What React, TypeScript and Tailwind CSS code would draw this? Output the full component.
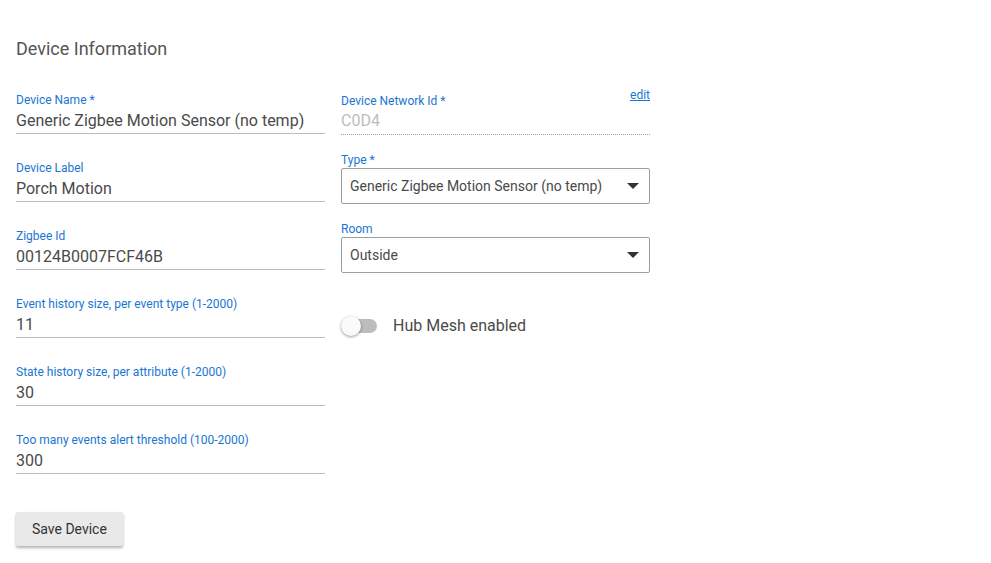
import React from "react";

const font = { fontFamily: "Roboto, 'Liberation Sans', sans-serif" };

function TextField({ label, value }: { label: string; value: string }) {
  return (
    <div className="mb-[27px]">
      <div className="h-[14px] text-[12px] leading-[14px] text-[#1976d2]">{label}</div>
      <div className="h-[27px] border-b border-[#bdbdbd] pt-[2px] text-[16px] leading-[24px] text-[#4a4a4a]">{value}</div>
    </div>
  );
}

function SelectField({ label, value }: { label: string; value: string }) {
  return (
    <div>
      <div className="h-[15px] text-[12px] leading-[14px] text-[#1976d2]">{label}</div>
      <div className="flex h-[36px] items-center justify-between rounded-[2px] border border-[#9e9e9e] pl-[8px] pr-[10px] text-[14px] text-[#4a4a4a]">
        <span>{value}</span>
        <svg width="12" height="6" viewBox="0 0 12 6">
          <path d="M0 0 L12 0 L6 6 Z" fill="#333" />
        </svg>
      </div>
    </div>
  );
}

export default function App() {
  const fields = [
    { label: "Device Name *", value: "Generic Zigbee Motion Sensor (no temp)" },
    { label: "Device Label", value: "Porch Motion" },
    { label: "Zigbee Id", value: "00124B0007FCF46B" },
    { label: "Event history size, per event type (1-2000)", value: "11" },
    { label: "State history size, per attribute (1-2000)", value: "30" },
    { label: "Too many events alert threshold (100-2000)", value: "300" },
  ];

  return (
    <div className="min-h-screen bg-white px-4 pt-[37px]" style={font}>
      <h2 className="h-[24px] text-[18px] leading-[24px] text-[#555]">Device Information</h2>

      <div className="mt-[32px] flex gap-4">
        {/* Left column */}
        <div className="w-[309px]">
          {fields.map((f) => (
            <TextField key={f.label} label={f.label} value={f.value} />
          ))}
        </div>

        {/* Right column */}
        <div className="w-[309px]">
          <div className="relative">
            <div className="h-[14px] pt-[1px] text-[12px] leading-[14px] text-[#1976d2]">Device Network Id *</div>
            <a className="absolute right-0 top-[-5px] text-[12px] leading-[14px] text-[#1976d2] underline" href="#">
              edit
            </a>
            <div className="h-[28px] border-b border-dotted border-[#9e9e9e] text-[16px] leading-[27px] text-[#bdbdbd]">C0D4</div>
          </div>

          <div className="mt-[18px]">
            <SelectField label="Type *" value="Generic Zigbee Motion Sensor (no temp)" />
          </div>
          <div className="mt-[18px]">
            <SelectField label="Room" value="Outside" />
          </div>

          <div className="mt-[43px] flex h-[20px] items-center">
            <div className="relative h-[20px] w-[36px]">
              <div className="absolute left-0 top-[3px] h-[14px] w-[36px] rounded-full bg-[#bdbdbd]" />
              <div className="absolute left-0 top-0 h-[20px] w-[20px] rounded-full bg-[#fafafa] shadow-[0_1px_3px_rgba(0,0,0,0.4)]" />
            </div>
            <span className="ml-[16px] text-[16px] text-[#4a4a4a]">Hub Mesh enabled</span>
          </div>
        </div>
      </div>

      <button className="mt-[11px] h-[34px] rounded-[2px] bg-[#e9e9e9] px-[16px] text-[14px] text-[#333] shadow-[0_2px_3px_rgba(0,0,0,0.3)]">
        Save Device
      </button>
    </div>
  );
}
